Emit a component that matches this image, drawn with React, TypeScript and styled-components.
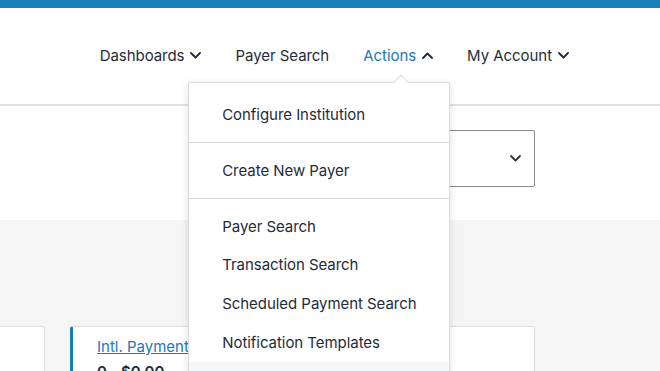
import styled, { createGlobalStyle } from "styled-components";
import { ReactElement } from "react";

const GlobalStyle = createGlobalStyle`
    html, body {
        margin: 0;
        padding: 0;
        background: #ffffff;
        font-family: "Inter", "Noto Sans", sans-serif;
        color: #1f2b3a;
        overflow: hidden;
    }
    * {
        box-sizing: border-box;
    }
`;

const Page = styled.div`
    width: 660px;
    height: 371px;
    position: relative;
    overflow: hidden;
`;

const TopBar = styled.div`
    height: 8px;
    background-color: #1481b8;
`;

const Header = styled.header`
    height: 98px;
    border-bottom: 2px solid #e2e2e2;
    display: flex;
    justify-content: flex-end;
    align-items: center;
    padding: 0 91px 2px 0;
`;

const NavList = styled.ul`
    list-style: none;
    margin: 0;
    padding: 0;
    display: flex;
    gap: 34px;
`;

const NavItem = styled.li<{ $active?: boolean }>`
    position: relative;
    display: flex;
    align-items: center;
    gap: 6px;
    font-size: 15px;
    letter-spacing: -0.05px;
    color: ${({ $active }) => ($active ? "#2477b9" : "#1f2b3a")};

    svg {
        color: #1f2b3a;
    }
`;

const Dropdown = styled.div`
    position: absolute;
    top: 36px;
    left: -175px;
    width: 262px;
    background: #ffffff;
    border: 1px solid #dcdcdc;
    border-radius: 2px;
    box-shadow: 0 2px 8px rgba(0, 0, 0, 0.12);
    z-index: 2;

    &::before {
        content: "";
        position: absolute;
        top: -6px;
        left: 206px;
        width: 11px;
        height: 11px;
        background: #ffffff;
        border-left: 1px solid #dcdcdc;
        border-top: 1px solid #dcdcdc;
        transform: rotate(45deg);
    }
`;

const Section = styled.div<{ $first?: boolean }>`
    padding: ${({ $first }) => ($first ? "13px 0 8px" : "8px 0")};
    border-top: ${({ $first }) => ($first ? "none" : "1px solid #d6d6d6")};
    color: #1f2b3a;
`;

const MenuItem = styled.div<{ $hover?: boolean }>`
    height: 38.7px;
    display: flex;
    align-items: center;
    padding-left: 33px;
    font-size: 15px;
    letter-spacing: -0.05px;
    background: ${({ $hover }) => ($hover ? "#f5f6f8" : "transparent")};
`;

const FilterBar = styled.div`
    height: 114px;
    display: flex;
    justify-content: flex-end;
    align-items: flex-start;
    padding: 24px 125px 0 0;
`;

const Select = styled.div`
    width: 250px;
    height: 57px;
    border: 1px solid #8a8a8a;
    border-radius: 2px;
    display: flex;
    align-items: center;
    justify-content: space-between;
    padding: 14px 13px 0 16px;
    font-size: 15px;
    color: #1f2b3a;
`;

const SelectChevron = styled.span`
    display: flex;
    margin-top: -14px;
    color: #333;
`;

const Content = styled.main`
    background: #f5f5f5;
    height: 200px;
    padding-top: 106px;
`;

const CardRow = styled.div`
    display: flex;
    gap: 25px;
    margin-left: -175px;
`;

const Card = styled.div<{ $accent?: boolean }>`
    width: 220px;
    height: 90px;
    background: #ffffff;
    border: 1px solid #dedede;
    border-left: ${({ $accent }) =>
        $accent ? "3px solid #1481b8" : "1px solid #dedede"};
    border-radius: 3px;
    padding: 10px 0 0 ${({ $accent }) => ($accent ? "24px" : "26px")};
`;

const CardLink = styled.a`
    display: block;
    font-size: 15px;
    color: #2477b9;
    text-decoration: underline;
    white-space: nowrap;
`;

const CardStats = styled.div`
    margin-top: 6px;
    display: flex;
    gap: 14px;
    font-size: 15px;
    font-weight: 600;
    color: #1f2b3a;
`;

const Chevron = ({ up }: { up?: boolean }): ReactElement => (
    <svg width="11" height="7" viewBox="0 0 11 7" fill="none">
        <path
            d={up ? "M1 6L5.5 1.5L10 6" : "M1 1L5.5 5.5L10 1"}
            stroke="currentColor"
            strokeWidth="1.8"
            strokeLinecap="round"
            strokeLinejoin="round"
        />
    </svg>
);

const menuSections = [
    ["Configure Institution"],
    ["Create New Payer"],
    [
        "Payer Search",
        "Transaction Search",
        "Scheduled Payment Search",
        "Notification Templates",
        "Manage Users",
    ],
];

const App = (): ReactElement => {
    return (
        <Page>
            <GlobalStyle />
            <TopBar />
            <Header>
                <nav>
                    <NavList>
                        <NavItem>
                            Dashboards <Chevron />
                        </NavItem>
                        <NavItem>Payer Search</NavItem>
                        <NavItem $active>
                            Actions <Chevron up />
                            <Dropdown>
                                {menuSections.map((items, index) => (
                                    <Section
                                        key={`section_${index}`}
                                        $first={index === 0}
                                    >
                                        {items.map((label) => (
                                            <MenuItem
                                                key={label}
                                                $hover={label === "Manage Users"}
                                            >
                                                {label}
                                            </MenuItem>
                                        ))}
                                    </Section>
                                ))}
                            </Dropdown>
                        </NavItem>
                        <NavItem>
                            My Account <Chevron />
                        </NavItem>
                    </NavList>
                </nav>
            </Header>
            <FilterBar>
                <Select>
                    <span>Daily</span>
                    <SelectChevron>
                        <Chevron />
                    </SelectChevron>
                </Select>
            </FilterBar>
            <Content>
                <CardRow>
                    <Card>
                        <CardLink>Domestic Payments</CardLink>
                        <CardStats>
                            <span>0</span>
                            <span>$0.00</span>
                        </CardStats>
                    </Card>
                    <Card $accent>
                        <CardLink>Intl. Payments</CardLink>
                        <CardStats>
                            <span>0</span>
                            <span>$0.00</span>
                        </CardStats>
                    </Card>
                    <Card>
                        <CardLink>Refunds</CardLink>
                        <CardStats>
                            <span>0</span>
                            <span>$0.00</span>
                        </CardStats>
                    </Card>
                </CardRow>
            </Content>
        </Page>
    );
};

export default App;
